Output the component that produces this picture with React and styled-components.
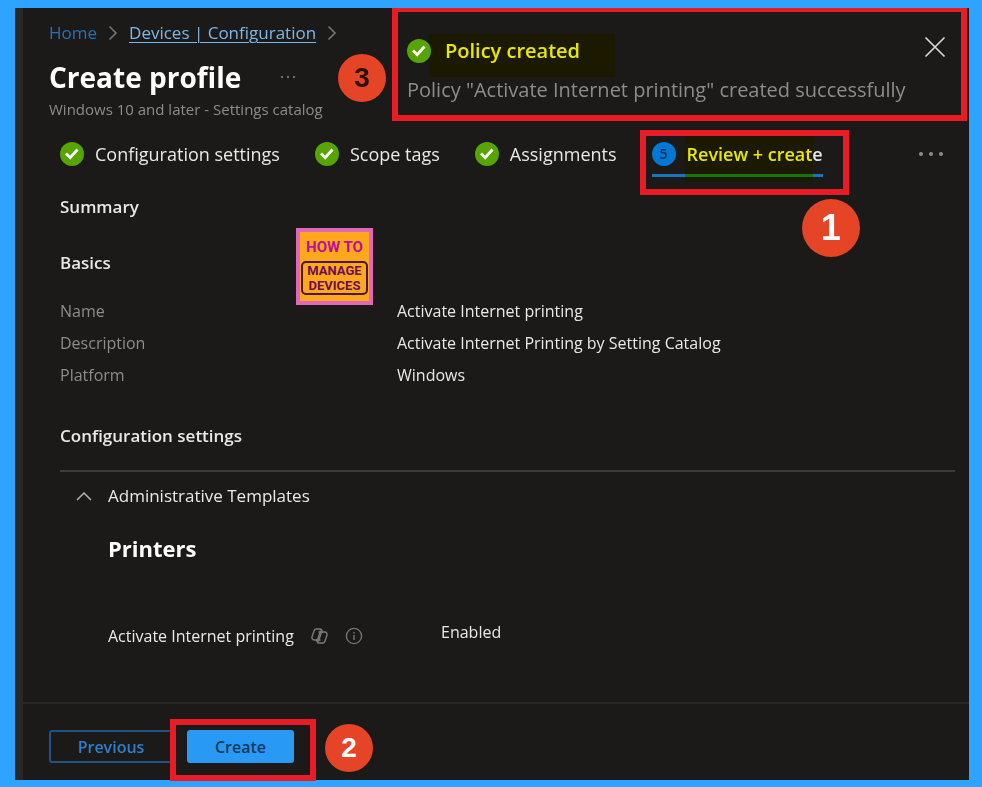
import React from 'react';
import styled, { createGlobalStyle } from 'styled-components';

const colors = {
  frame: '#2ea3ff',
  background: '#1b1a19',
  edge: '#292827',
  text: '#e9e8e7',
  muted: '#8e8c8a',
  link: '#2372ba',
  linkActive: '#7ab8ea',
  primary: '#2899f5',
  done: '#57a300',
  mark: '#e81c24',
  badge: '#e64426',
};

const GlobalStyle = createGlobalStyle`
  * {
    box-sizing: border-box;
  }
  body {
    margin: 0;
    background-color: ${colors.frame};
    color: ${colors.text};
    font-family: 'Open Sans', 'Noto Sans', sans-serif;
    font-size: 16px;
    line-height: 24px;
  }
  h1, h2, h3, p, dl, dd, ol {
    margin: 0;
    padding: 0;
  }
  button {
    font-family: inherit;
    cursor: pointer;
  }
`;

const Page = styled.div`
  display: flex;
  min-height: 100vh;
  padding: 8px 13px 7px 15px;
`;

const Blade = styled.div`
  display: flex;
  flex: 1;
  flex-direction: column;
  min-width: 0;
  background-color: ${colors.background};
  border-left: 8px solid ${colors.edge};
`;

const Header = styled.header`
  display: grid;
  grid-template-columns: 369px 1fr;
  padding-right: 2px;
`;

const Heading = styled.div`
  position: relative;
  padding: 13px 0 0 26px;
`;

const Breadcrumb = styled.nav`
  display: flex;
  align-items: center;
  gap: 10px;
  font-size: 17px;
`;

const Crumb = styled.a`
  color: ${props => (props.$active ? colors.linkActive : colors.link)};
  text-decoration: ${props => (props.$active ? 'underline' : 'none')};
  text-decoration-thickness: 1px;
  text-underline-offset: 3px;
  white-space: nowrap;
`;

const TitleRow = styled.div`
  display: flex;
  align-items: center;
  gap: 39px;
  margin-top: 12px;
`;

const Title = styled.h1`
  color: #ffffff;
  font-size: 28px;
  font-weight: 700;
  line-height: 40px;
`;

const Subtitle = styled.p`
  color: ${colors.muted};
  font-size: 15px;
`;

const IconButton = styled.button`
  display: flex;
  align-items: center;
  padding: 0;
  border: 0;
  background: none;
  color: ${props => props.color || colors.muted};
`;

const Toast = styled.section`
  padding: 24px 15px 11px 9px;
  border: 6px solid ${colors.mark};
  border-top-width: 4px;
`;

const ToastHead = styled.div`
  display: flex;
  align-items: center;
  gap: 14px;
  height: 30px;
`;

const CloseButton = styled(IconButton)`
  align-self: flex-start;
`;

const ToastTitle = styled.h2`
  position: relative;
  flex: 1;
  font-size: 20px;
  font-weight: 600;
`;

const ToastText = styled.p`
  margin-top: 12px;
  color: ${colors.muted};
  font-size: 20px;
`;

const Marker = styled.span`
  position: absolute;
  top: ${props => props.$top}px;
  left: ${props => props.$left}px;
  width: ${props => props.$width}px;
  height: ${props => props.$height}px;
  background-color: #ffff00;
  mix-blend-mode: multiply;
  pointer-events: none;
`;

const MarkBox = styled.span`
  position: absolute;
  inset: ${props => props.$inset};
  border: 6px solid ${colors.mark};
  pointer-events: none;
`;

const Badge = styled.span`
  position: absolute;
  top: ${props => props.$top}px;
  right: ${props => props.$right}px;
  display: flex;
  justify-content: center;
  align-items: center;
  width: ${props => props.$size}px;
  height: ${props => props.$size}px;
  border-radius: 50%;
  background-color: ${colors.badge};
  color: ${props => props.color || '#ffffff'};
  font-family: 'Liberation Sans', sans-serif;
  font-size: ${props => (props.$size > 50 ? 36 : 28)}px;
  font-weight: 700;
`;

const Steps = styled.div`
  display: flex;
  justify-content: space-between;
  align-items: flex-start;
  padding: 21px 26px 0 37px;
`;

const StepList = styled.ol`
  display: flex;
  gap: 35px;
  list-style: none;
`;

const Step = styled.li`
  position: relative;
  display: flex;
  align-items: center;
  gap: 11px;
  padding-bottom: 8px;
  border-bottom: 3px solid ${props => (props.$active ? '#1a74bd' : 'transparent')};
  font-size: 18px;
  font-weight: ${props => (props.$active ? 600 : 400)};
  white-space: nowrap;
`;

const StepNumber = styled.span`
  display: flex;
  justify-content: center;
  align-items: center;
  width: 24px;
  height: 24px;
  border-radius: 50%;
  background-color: #0078d4;
  color: #0b2d4c;
  font-size: 14px;
  font-weight: 600;
`;

const MoreSteps = styled(IconButton)`
  height: 24px;
`;

const Body = styled.main`
  position: relative;
  flex: 1;
  padding: 18px 14px 24px 37px;
`;

const SectionTitle = styled.h2`
  margin-top: ${props => props.$top || 0}px;
  font-size: 17px;
  font-weight: 600;
`;

const Details = styled.dl`
  display: grid;
  grid-template-columns: 337px 1fr;
  margin-top: 20px;
  line-height: 32px;
`;

const Label = styled.dt`
  color: ${colors.muted};
`;

const Divider = styled.hr`
  height: 2px;
  margin: 22px 0 12px;
  border: 0;
  background-color: #3d3b39;
`;

const Expander = styled.button`
  display: flex;
  align-items: center;
  gap: 16px;
  padding: 0 0 0 16px;
  border: 0;
  background: none;
  color: ${colors.text};
  font-size: 17px;
  line-height: 24px;
`;

const Category = styled.div`
  padding-left: 48px;
`;

const CategoryTitle = styled.h3`
  margin-top: 24px;
  color: #ffffff;
  font-size: 22px;
  font-weight: 700;
  line-height: 32px;
`;

const Setting = styled.div`
  display: grid;
  grid-template-columns: 333px 1fr;
  align-items: start;
  margin-top: 56px;
`;

const SettingName = styled.div`
  display: flex;
  align-items: center;
  gap: 17px;
  padding-top: 4px;
`;

const Logo = styled.div`
  position: absolute;
  top: 51px;
  left: 273px;
  display: flex;
  flex-direction: column;
  align-items: center;
  width: 77px;
  height: 77px;
  padding-top: 5px;
  border: 4px solid #df68bd;
  background-color: #ffa81c;
  color: #bb0f9c;
  font-family: Roboto, sans-serif;
  font-size: 15px;
  font-weight: 700;
  line-height: 20px;
`;

const LogoPlate = styled.div`
  width: 67px;
  height: 34px;
  margin-top: 4px;
  border: 2px solid #4d1537;
  border-radius: 5px;
  color: #6d0d58;
  font-size: 13px;
  line-height: 15px;
  text-align: center;
`;

const LogoLine = styled.div`
  height: 15px;
`;

const Footer = styled.footer`
  display: flex;
  gap: 14px;
  padding: 26px 26px 17px;
  border-top: 2px solid #282726;
`;

const CreateContainer = styled.div`
  position: relative;
`;

const Button = styled.button`
  width: ${props => (props.$primary ? 107 : 124)}px;
  height: 33px;
  padding: 0;
  border: 2px solid ${props => (props.$primary ? colors.primary : '#1f5382')};
  border-radius: 3px;
  background-color: ${props => (props.$primary ? colors.primary : 'transparent')};
  color: ${props => (props.$primary ? '#10395c' : '#2b7fcb')};
  font-size: 16px;
  font-weight: 600;
  line-height: 24px;
`;

const DoneIcon = () => (
  <svg width="24" height="24" viewBox="0 0 24 24" aria-hidden="true">
    <circle cx="12" cy="12" r="12" fill={colors.done} />
    <path d="M6 11.500l4.200 4.200 7.300-8.200" fill="none" stroke="#fff" strokeWidth="2.8" />
  </svg>
);

const CrumbArrow = () => (
  <svg width="12" height="16" viewBox="0 0 12 16" aria-hidden="true">
    <path d="M2.500 1.500L9 8l-6.500 6.500" fill="none" stroke="#777573" strokeWidth="1.6" />
  </svg>
);

const Dots = ({ size, gap }) => (
  <svg width={gap * 2 + 4} height="8" viewBox={`0 0 ${gap * 2 + 4} 8`} aria-hidden="true">
    {[0, 1, 2].map(i => (
      <circle key={i} cx={2 + i * gap} cy="4" r={size} fill="currentColor" />
    ))}
  </svg>
);

const CloseIcon = () => (
  <svg width="22" height="22" viewBox="0 0 22 22" aria-hidden="true">
    <path d="M1.500 1.500l19 19M20.500 1.500l-19 19" stroke="#d8d7d6" strokeWidth="1.7" />
  </svg>
);

const ChevronUp = () => (
  <svg width="16" height="10" viewBox="0 0 16 10" aria-hidden="true">
    <path d="M1 9l7-7 7 7" fill="none" stroke="#b5b3b1" strokeWidth="1.5" />
  </svg>
);

const CopilotIcon = () => (
  <svg width="17" height="16" viewBox="0 0 17 16" fill="none" stroke="#7d7b79" strokeWidth="1.4" aria-hidden="true">
    <path d="M11.500 4L11 2.500C10.700 1.500 10 1 9 1H5.300C4.300 1 3.500 1.600 3.200 2.500L1.100 8.500C.5 10.300 1.500 12 3.200 12H5c1 0 1.700-.6 2-1.500L9.600 2.500" />
    <path d="M5.500 12l.5 1.500c.3 1 1 1.500 2 1.500h3.700c1 0 1.800-.6 2.100-1.500l2.100-6c.6-1.800-.4-3.500-2.100-3.500H12c-1 0-1.700.6-2 1.500L7.400 13.500" />
    <path d="M7.500 4H12M5 12h4.500" />
  </svg>
);

const InfoIcon = () => (
  <svg width="18" height="18" viewBox="0 0 18 18" fill="none" stroke="#777573" strokeWidth="1.4" aria-hidden="true">
    <circle cx="9" cy="9" r="7.600" />
    <path d="M9 8v5M9 5v1.500" />
  </svg>
);

const doneSteps = ['Configuration settings', 'Scope tags', 'Assignments'];

const basics = [
  ['Name', 'Activate Internet printing'],
  ['Description', 'Activate Internet Printing by Setting Catalog'],
  ['Platform', 'Windows'],
];

export default function App() {
  return (
    <Page>
      <GlobalStyle />
      <Blade>
        <Header>
          <Heading>
            <Breadcrumb aria-label="Breadcrumb">
              <Crumb href="#home">Home</Crumb>
              <CrumbArrow />
              <Crumb href="#configuration" $active>
                Devices | Configuration
              </Crumb>
              <CrumbArrow />
            </Breadcrumb>
            <TitleRow>
              <Title>Create profile</Title>
              <IconButton aria-label="More actions">
                <Dots size={1} gap={6} />
              </IconButton>
            </TitleRow>
            <Subtitle>Windows 10 and later - Settings catalog</Subtitle>
            <Badge $top={46} $right={6} $size={48} color="#2a0f0a">
              3
            </Badge>
          </Heading>
          <Toast role="status">
            <ToastHead>
              <DoneIcon />
              <ToastTitle>
                Policy created
                <Marker $top={-5} $left={-16} $width={186} $height={43} />
              </ToastTitle>
              <CloseButton aria-label="Close">
                <CloseIcon />
              </CloseButton>
            </ToastHead>
            <ToastText>
              Policy "Activate Internet printing" created successfully
            </ToastText>
          </Toast>
        </Header>

        <Steps>
          <StepList>
            {doneSteps.map(step => (
              <Step key={step}>
                <DoneIcon />
                {step}
              </Step>
            ))}
            <Step $active aria-current="step">
              <StepNumber>5</StepNumber>
              Review + create
              <MarkBox $inset="-12px -26px -21px -12px" />
              <Marker $top={-6} $left={33} $width={128} $height={46} />
              <Badge $top={57} $right={-37} $size={58}>
                1
              </Badge>
            </Step>
          </StepList>
          <MoreSteps aria-label="More steps">
            <Dots size={2} gap={10} />
          </MoreSteps>
        </Steps>

        <Body>
          <SectionTitle>Summary</SectionTitle>
          <SectionTitle $top={32}>Basics</SectionTitle>
          <Details>
            {basics.map(([label, value]) => (
              <React.Fragment key={label}>
                <Label>{label}</Label>
                <dd>{value}</dd>
              </React.Fragment>
            ))}
          </Details>
          <SectionTitle $top={33}>Configuration settings</SectionTitle>
          <Divider />
          <Expander aria-expanded="true">
            <ChevronUp />
            Administrative Templates
          </Expander>
          <Category>
            <CategoryTitle>Printers</CategoryTitle>
            <Setting>
              <SettingName>
                Activate Internet printing
                <CopilotIcon />
                <InfoIcon />
              </SettingName>
              <span>Enabled</span>
            </Setting>
          </Category>
          <Logo>
            HOW TO
            <LogoPlate>
              <LogoLine>MANAGE</LogoLine>
              <LogoLine>DEVICES</LogoLine>
            </LogoPlate>
          </Logo>
        </Body>

        <Footer>
          <Button>Previous</Button>
          <CreateContainer>
            <Button $primary>Create</Button>
            <MarkBox $inset="-11px -22px -18px -17px" />
            <Badge $top={-6} $right={-79} $size={48}>
              2
            </Badge>
          </CreateContainer>
        </Footer>
      </Blade>
    </Page>
  );
}
